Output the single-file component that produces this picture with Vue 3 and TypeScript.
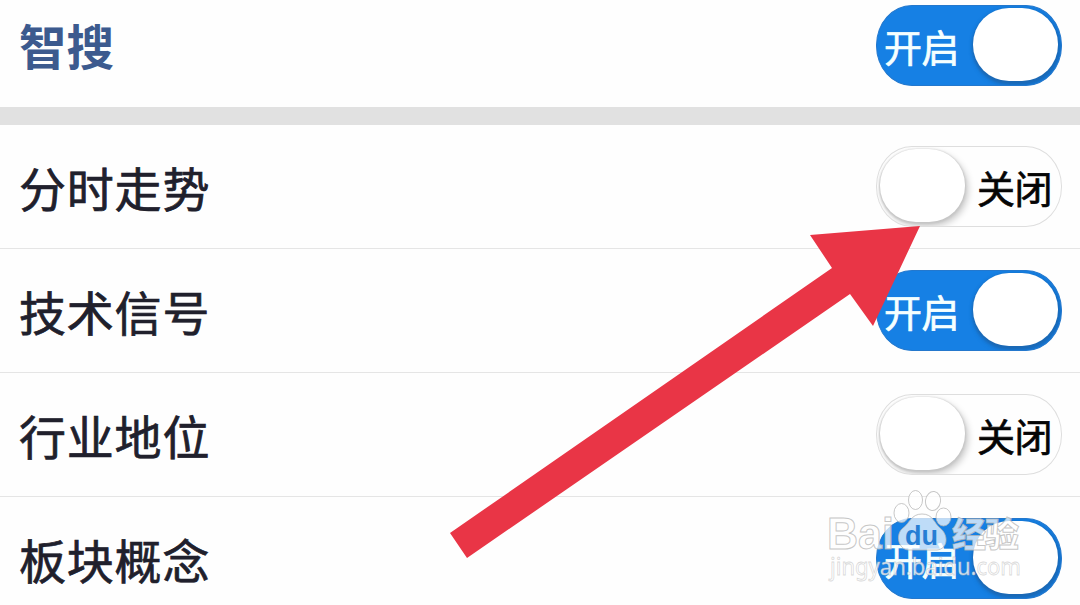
<script setup lang="ts">
import { ref } from 'vue'

interface Setting {
  label: string
  on: boolean
}

const settings = ref<Setting[]>([
  { label: '智搜', on: true },
  { label: '分时走势', on: false },
  { label: '技术信号', on: true },
  { label: '行业地位', on: false },
  { label: '板块概念', on: true },
])
</script>

<template>
  <main class="screen">
    <section
      v-for="(item, index) in settings"
      :key="item.label"
      class="row"
      :class="{ heading: index === 0 }"
    >
      <span class="label">{{ item.label }}</span>
      <button class="toggle" :class="{ on: item.on }" type="button" @click="item.on = !item.on">
        <span class="knob"></span>
        <span class="state">{{ item.on ? '开启' : '关闭' }}</span>
      </button>
    </section>

    <svg class="overlay" viewBox="0 0 1080 605" aria-hidden="true">
      <path class="arrow" d="M450 533 L832 268 L810 235 L920 226 L873 326 L850 294 L467 558 Z" />
      <g class="mark">
        <text class="brand" x="827" y="549" textLength="67" lengthAdjust="spacingAndGlyphs">Bai</text>
        <ellipse cx="901.5" cy="513" rx="7.5" ry="9.5" />
        <ellipse cx="915.5" cy="500" rx="7" ry="9.5" />
        <ellipse cx="933" cy="501" rx="7.5" ry="9.5" transform="rotate(8 933 501)" />
        <ellipse cx="943.5" cy="517" rx="7.5" ry="9" />
        <path d="M922 514 C911 514 910 523 903 528 C895 534 898 550 909 550 L937 550 C948 549 949 535 940 528 C934 523 933 514 922 514 Z" />
        <text class="brand cjk" x="952" y="547" textLength="67">经验</text>
      </g>
      <text class="du" x="905" y="545" textLength="33" lengthAdjust="spacingAndGlyphs">du</text>
      <text class="site" x="830" y="575" textLength="191" lengthAdjust="spacingAndGlyphs">jingyan.baidu.com</text>
    </svg>
  </main>
</template>

<style>
body {
  margin: 0;
  overflow: hidden;
}
</style>

<style scoped>
.screen {
  position: relative;
  height: 605px;
  overflow: hidden;
  background: #fefefe;
  font-family: "Noto Sans CJK SC", sans-serif;
}

.row {
  display: flex;
  justify-content: space-between;
  box-sizing: border-box;
  height: 124px;
  padding: 21px 18px 0 19px;
  border-bottom: 1px solid #e5e5e5;
}

.heading {
  height: 125px;
  padding-top: 5px;
  border-bottom: 18px solid #e1e1e1;
}

.label {
  height: 82px;
  font-size: 47px;
  line-height: 82px;
  letter-spacing: 0.8px;
  color: #20202c;
  -webkit-text-stroke: 0.7px #20202c;
}

.heading .label {
  height: 80px;
  font-size: 47.5px;
  font-weight: 700;
  line-height: 80px;
  letter-spacing: 0;
  color: #3c5a8e;
  -webkit-text-stroke: 0;
}

.toggle {
  display: flex;
  align-items: flex-start;
  box-sizing: border-box;
  width: 186px;
  height: 81px;
  padding: 2px 2px 2px 3px;
  overflow: hidden;
  border: 1px solid #dedede;
  border-radius: 36px / 40px;
  background: #fefefe;
  color: #050505;
  font-family: inherit;
}

.toggle.on {
  flex-direction: row-reverse;
  border-color: #2478cd;
  background: #1680e4;
  color: #f5ffff;
}

.knob {
  flex: none;
  width: 85px;
  height: 73px;
  border-radius: 36px;
  background: #fff;
  box-shadow: 0 1px 2px 1px #c6c6c6, 3px 4px 7px rgb(0 0 0 / 22%);
}

.on .knob {
  margin-right: 1px;
  box-shadow: 0 2px 3px 1px #1c69b5, 2px 3px 6px rgb(15 70 130 / 45%);
}

.state {
  flex: none;
  width: 76px;
  margin-left: 12px;
  font-size: 38px;
  line-height: 75px;
  letter-spacing: -0.5px;
  text-align: left;
  -webkit-text-stroke: 0.7px currentColor;
}

.on .state {
  margin: 0 13px 0 0;
}

.overlay {
  position: absolute;
  inset: 0;
  width: 1080px;
  height: 605px;
  pointer-events: none;
}

.arrow {
  fill: #e93546;
}

.mark {
  fill: rgb(255 255 255 / 72%);
  stroke: rgb(180 180 180 / 75%);
  stroke-width: 1;
}

.brand {
  font: 700 44px "Liberation Sans", sans-serif;
}

.cjk {
  font: 900 34px "Noto Sans CJK SC", sans-serif;
}

.du {
  fill: #267ed4;
  font: 700 28px "Liberation Sans", sans-serif;
}

.site {
  fill: rgb(255 255 255 / 78%);
  stroke: rgb(185 185 185 / 55%);
  stroke-width: 0.8;
  font: 24px "Noto Sans", sans-serif;
}
</style>
